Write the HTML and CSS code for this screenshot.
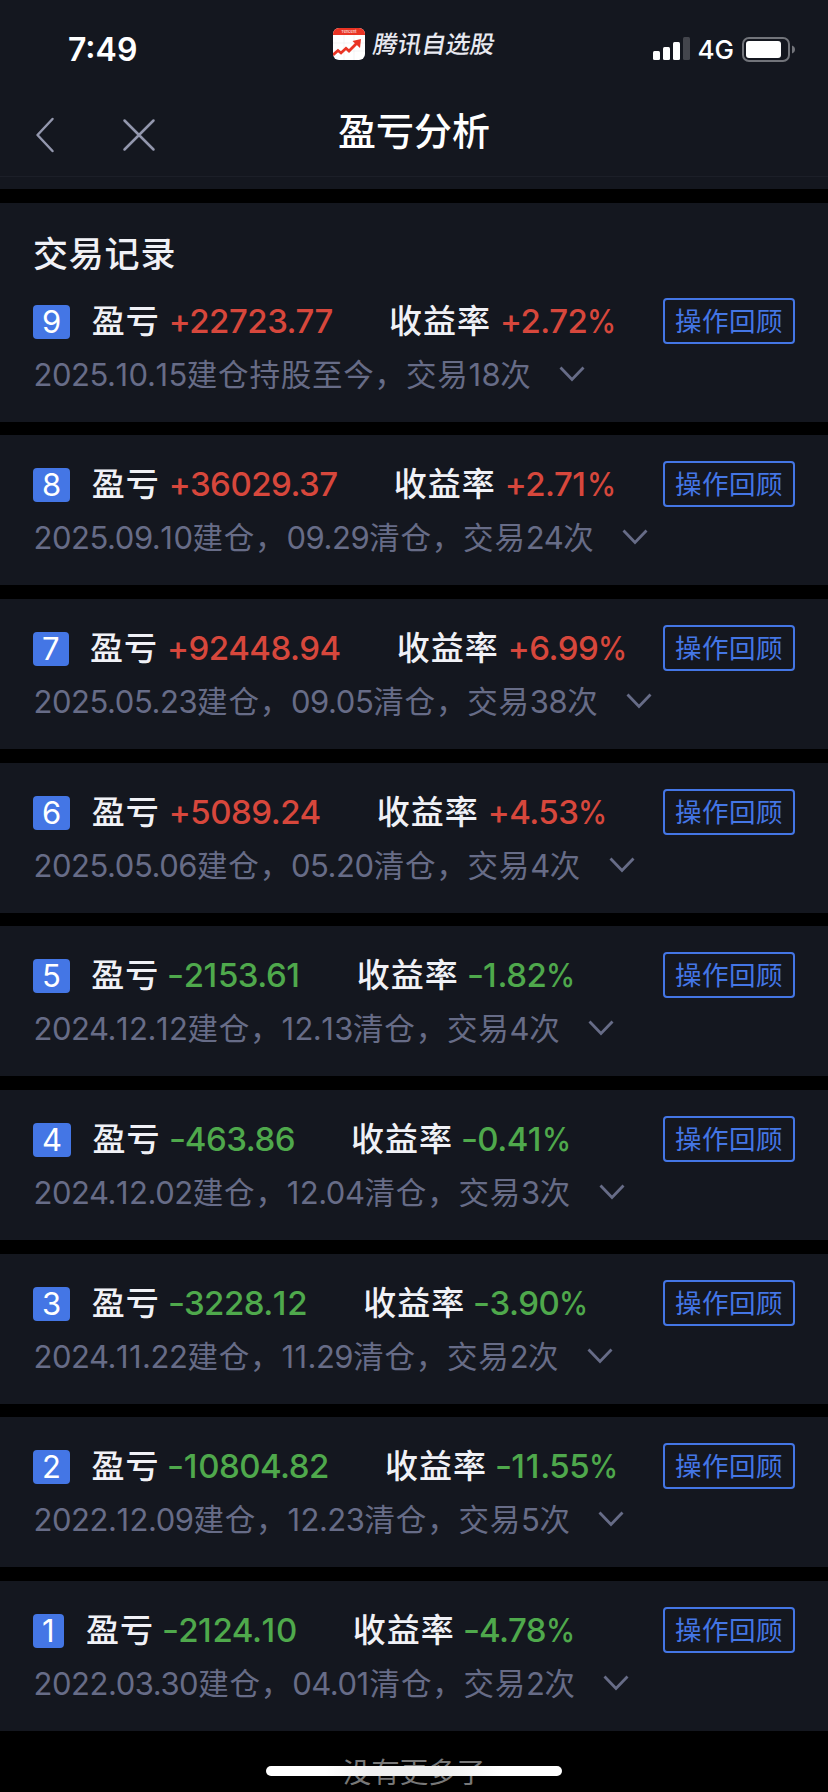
FILE: index.html
```
<!DOCTYPE html>
<html lang="zh-CN">

<head>
    <meta charset="UTF-8">
    <meta name="viewport" content="width=device-width, initial-scale=1.0">
    <title>盈亏分析</title>
    <link rel="stylesheet" href="styles.css">
</head>

<body>

    <header class="header">
        <div class="status-bar">
            <span class="time">7:49</span>
            <div class="brand">
                <svg class="brand-logo" width="32" height="32" viewBox="0 0 32 32">
                    <rect width="32" height="32" rx="6" fill="#fff"/>
                    <path d="M11 7v25M21 7v25M0 15h32M0 23h32" stroke="#eee" stroke-width=".6"/>
                    <path d="M0 7V6a6 6 0 0 1 6-6h20a6 6 0 0 1 6 6v1z" fill="#ea3424"/>
                    <text x="16" y="5.2" class="logo-text" text-anchor="middle">Tencent</text>
                    <path d="M0 27l5-4.500 3 2.500 5-4.700 3 2.800L24 15" fill="none" stroke="#ea3424" stroke-width="2.800"/>
                    <path d="M28 11l-1 9-7.500-7z" fill="#ea3424"/>
                </svg>
                <span class="brand-name">腾讯自选股</span>
            </div>
            <div class="signal">
                <svg width="38" height="24" viewBox="0 0 38 24">
                    <rect x="0" y="14" width="7" height="9" rx="1.500" fill="#fff"/>
                    <rect x="10" y="10" width="7" height="13" rx="1.500" fill="#fff"/>
                    <rect x="20" y="5" width="7" height="18" rx="1.500" fill="#fff"/>
                    <rect x="30" y="0" width="7" height="23" rx="1.500" fill="#43454c"/>
                </svg>
                <span class="network">4G</span>
                <svg width="54" height="26" viewBox="0 0 54 26">
                    <rect x="1" y="1" width="46" height="23" rx="6" fill="none" stroke="#72747a" stroke-width="2"/>
                    <rect x="4" y="4" width="35" height="17" rx="3" fill="#fff"/>
                    <path d="M50 8.500q3 1.200 3 4t-3 4z" fill="#72747a"/>
                </svg>
            </div>
        </div>
        <nav class="nav-bar">
            <div class="nav-buttons">
                <svg width="20" height="36" viewBox="0 0 20 36">
                    <path d="M17.500 2L2.500 18l15 16" class="nav-icon"/>
                </svg>
                <svg width="34" height="34" viewBox="0 0 34 34">
                    <path d="M2.500 2.500l29 29M31.500 2.500l-29 29" class="nav-icon"/>
                </svg>
            </div>
            <h1>盈亏分析</h1>
        </nav>
    </header>

    <main class="record-list" id="recordList"></main>

    <p class="no-more">没有更多了</p>
    <div class="home-indicator"></div>

    <script>
        const records = [
            { no: 9, profit: "+22723.77", rate: "+2.72%", detail: "2025.10.15建仓持股至今，交易18次" },
            { no: 8, profit: "+36029.37", rate: "+2.71%", detail: "2025.09.10建仓，09.29清仓，交易24次" },
            { no: 7, profit: "+92448.94", rate: "+6.99%", detail: "2025.05.23建仓，09.05清仓，交易38次" },
            { no: 6, profit: "+5089.24", rate: "+4.53%", detail: "2025.05.06建仓，05.20清仓，交易4次" },
            { no: 5, profit: "-2153.61", rate: "-1.82%", detail: "2024.12.12建仓，12.13清仓，交易4次" },
            { no: 4, profit: "-463.86", rate: "-0.41%", detail: "2024.12.02建仓，12.04清仓，交易3次" },
            { no: 3, profit: "-3228.12", rate: "-3.90%", detail: "2024.11.22建仓，11.29清仓，交易2次" },
            { no: 2, profit: "-10804.82", rate: "-11.55%", detail: "2022.12.09建仓，12.23清仓，交易5次" },
            { no: 1, profit: "-2124.10", rate: "-4.78%", detail: "2022.03.30建仓，04.01清仓，交易2次" }
        ];

        // Narrow glyphs (1, -, %) get their own spacing
        function formatNumber(text) {
            return String(text).replace(/[1%-]/g, char => {
                const name = char === "1" ? "one" : char === "%" ? "percent" : "minus";
                return `<span class="${name}">${char}</span>`;
            });
        }

        function formatDetail(text) {
            return text.replace(/[\d.]+/g, number => `<span class="digits">${formatNumber(number)}</span>`);
        }

        function addRecord(record, index) {
            const card = document.createElement("section");
            card.className = "record";
            const color = record.profit.startsWith("+") ? "up" : "down";

            card.innerHTML = `
                ${index === 0 ? '<h2>交易记录</h2>' : ''}
                <div class="summary">
                    <span class="number">${formatNumber(record.no)}</span>
                    <span class="label">盈亏</span>
                    <span class="value ${color}">${formatNumber(record.profit)}</span>
                    <span class="label rate-label">收益率</span>
                    <span class="value ${color}">${formatNumber(record.rate)}</span>
                    <button class="review-btn">操作回顾</button>
                </div>
                <div class="detail">
                    <span>${formatDetail(record.detail)}</span>
                    <svg class="arrow" width="26" height="16" viewBox="0 0 26 16">
                        <path d="M1.500 1.500L13 13.500l11.500-12" fill="none" stroke="#676c87" stroke-width="2.800"/>
                    </svg>
                </div>
            `;
            document.getElementById("recordList").appendChild(card);
        }

        records.forEach(addRecord);
    </script>

</body>

</html>
```
FILE: styles.css
```
/* General */
* {
    box-sizing: border-box;
}

body {
    font-family: Inter, "Noto Sans CJK SC", sans-serif;
    background-color: #000;
    color: #f0f1f6;
    width: 828px;
    height: 1792px;
    margin: 0;
    overflow: hidden;
    position: relative;
}

/* Header */
.header {
    height: 189px;
    background-color: #14171f;
}

.status-bar {
    display: grid;
    grid-template-columns: 1fr auto 1fr;
    height: 88px;
    padding: 0 33px 0 68px;
    color: #fff;
}

.time {
    font-size: 32px;
    font-weight: 600;
    line-height: 36px;
    padding-top: 32px;
}

.brand {
    display: flex;
    gap: 6px;
    padding-top: 28px;
    margin-left: -37px;
}

.logo-text {
    font-size: 4px;
    fill: #fff;
}

.brand-name {
    font-size: 24.300px;
    font-weight: 500;
    line-height: 32px;
    color: #e8e9f0;
    transform: skewX(-10deg);
}

.signal {
    display: flex;
    justify-content: flex-end;
    padding-top: 37px;
    margin-right: -1px;
}

.network {
    font-size: 26px;
    font-weight: 500;
    line-height: 26px;
    margin: 0 8px 0 7px;
}

.nav-bar {
    display: grid;
    grid-template-columns: 1fr auto 1fr;
    height: 89px;
    padding: 0 35px;
    border-bottom: 1px solid #1c1f28;
}

.nav-buttons {
    display: flex;
    align-items: center;
    gap: 67px;
    padding-top: 6px;
}

.nav-icon {
    fill: none;
    stroke: #9397ad;
    stroke-width: 2.500;
    stroke-linecap: round;
    stroke-linejoin: round;
}

h1 {
    font-size: 38px;
    font-weight: 500;
    line-height: 56px;
    color: #fff;
    margin: 15px 0 0;
}

/* Records */
.record-list {
    display: flex;
    flex-direction: column;
    gap: 13.700px;
    padding-top: 14px;
}

.record {
    height: 150px;
    padding: 26px 33px 0;
    background-color: #14171f;
}

.record:first-child {
    height: 218.500px;
}

h2 {
    font-size: 35px;
    font-weight: 500;
    line-height: 50px;
    letter-spacing: 0.800px;
    margin: 0 0 19px;
}

.summary {
    display: flex;
    align-items: center;
    height: 46px;
    white-space: nowrap;
}

.number {
    font-size: 31px;
    line-height: 34px;
    height: 34px;
    padding: 0 9px;
    margin: 2px 21.500px 0 0;
    border-radius: 4px;
    background-color: #4476e5;
    color: #fff;
}

.label {
    font-size: 33px;
    font-weight: 500;
    line-height: 46px;
    letter-spacing: 1px;
}

.value {
    font-size: 33px;
    font-weight: 500;
    line-height: 46px;
    letter-spacing: -0.500px;
    margin-left: 9px;
}

.one {
    letter-spacing: 0.800px;
}

.minus {
    display: inline-block;
    letter-spacing: 0;
    transform: scaleX(1.150);
}

.percent {
    display: inline-block;
    letter-spacing: 0;
    transform: scaleX(0.890);
    transform-origin: left;
}

.up {
    color: #d7473c;
}

.down {
    color: #4fa94c;
}

.rate-label {
    margin-left: 56px;
}

.review-btn {
    width: 132px;
    height: 46px;
    margin-left: auto;
    padding: 0;
    border: 2px solid #4476e5;
    border-radius: 4px;
    background: none;
    color: #4476e5;
    font-family: inherit;
    font-size: 26.500px;
    line-height: 40px;
    letter-spacing: 0.500px;
}

.detail {
    display: flex;
    align-items: center;
    gap: 27.500px;
    height: 44px;
    margin-top: 9px;
    padding-left: 0.500px;
    font-size: 30.500px;
    line-height: 44px;
    letter-spacing: 0.800px;
    color: #676c87;
    white-space: nowrap;
}

.digits {
    font-size: 31px;
    letter-spacing: -0.450px;
}

.digits .one {
    letter-spacing: 0.400px;
}

.arrow {
    margin-bottom: 2px;
}

.no-more {
    margin: 22px 0 0;
    font-size: 28.500px;
    line-height: 40px;
    text-align: center;
    color: #777;
}

.home-indicator {
    position: absolute;
    left: 266px;
    top: 1766px;
    width: 296px;
    height: 10px;
    border-radius: 5px;
    background: linear-gradient(90deg, #fff 20%, #f0f0f0 35%, #f0f0f0 60%, #fff 80%);
}
```
